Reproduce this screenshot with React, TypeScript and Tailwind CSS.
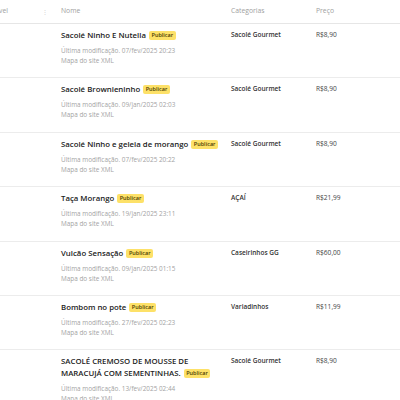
import React from 'react';

type Product = {
  name: string;
  modified: string;
  category: string;
  price: string;
};

const products: Product[] = [
  { name: 'Sacolé Ninho E Nutella', modified: '07/fev/2025 20:23', category: 'Sacolé Gourmet', price: 'R$8,90' },
  { name: 'Sacolé Brownieninho', modified: '09/jan/2025 02:03', category: 'Sacolé Gourmet', price: 'R$8,90' },
  { name: 'Sacolé Ninho e geleia de morango', modified: '07/fev/2025 20:22', category: 'Sacolé Gourmet', price: 'R$8,90' },
  { name: 'Taça Morango', modified: '19/jan/2025 23:11', category: 'AÇAÍ', price: 'R$21,99' },
  { name: 'Vulcão Sensação', modified: '09/jan/2025 01:15', category: 'Caseirinhos GG', price: 'R$60,00' },
  { name: 'Bombom no pote', modified: '27/fev/2025 02:23', category: 'Variadinhos', price: 'R$11,99' },
  { name: 'SACOLÉ CREMOSO DE MOUSSE DE MARACUJÁ COM SEMENTINHAS.', modified: '13/fev/2025 02:44', category: 'Sacolé Gourmet', price: 'R$8,90' },
];

const Badge = () => (
  <span className="ml-[3px] inline-block rounded-[2px] bg-[#fde168] px-[2.5px] align-[1px] text-[5.5px] font-semibold leading-[9px] text-[#4a3b00]">
    Publicar
  </span>
);

const Row = ({ p }: { p: Product }) => (
  <div className="flex h-[54.4px] border-b border-[#ececec]">
    <div className="w-[61px] shrink-0" />
    <div className="w-[170px] shrink-0 pt-[5px] pr-[2px]">
      <div className="text-[7.8px] font-semibold leading-[12px] text-[#222]">
        {p.name}
        <Badge />
      </div>
      <div className="mt-[5px] text-[6.4px] leading-[10px] text-[#a3a3a3]">
        Última modificação. {p.modified}
      </div>
      <div className="text-[6.4px] leading-[10px] text-[#a3a3a3]">Mapa do site XML</div>
    </div>
    <div className="w-[85px] shrink-0 pt-[5px] text-[6.5px] font-semibold leading-[12px] text-[#333]">
      {p.category}
    </div>
    <div className="flex-1 pt-[5px] text-[6.6px] leading-[12px] text-[#444]">{p.price}</div>
  </div>
);

export default function App() {
  return (
    <div
      className="h-[400px] w-[400px] overflow-hidden bg-white"
      style={{ fontFamily: '"Open Sans", "Noto Sans", sans-serif' }}
    >
      <div className="flex h-[24px] items-center border-b border-[#e6e6e6] text-[6.8px] text-[#a0a0a0]">
        <div className="flex w-[61px] shrink-0 items-center overflow-hidden">
          <span className="-ml-[25px] whitespace-nowrap">Disponível</span>
          <span className="ml-auto mr-[13px] text-[6px] leading-none text-[#d0d0d0]">⋮</span>
        </div>
        <div className="w-[170px] shrink-0">Nome</div>
        <div className="w-[85px] shrink-0">Categorias</div>
        <div className="flex-1">Preço</div>
      </div>
      {products.map((p) => (
        <Row key={p.name} p={p} />
      ))}
    </div>
  );
}
